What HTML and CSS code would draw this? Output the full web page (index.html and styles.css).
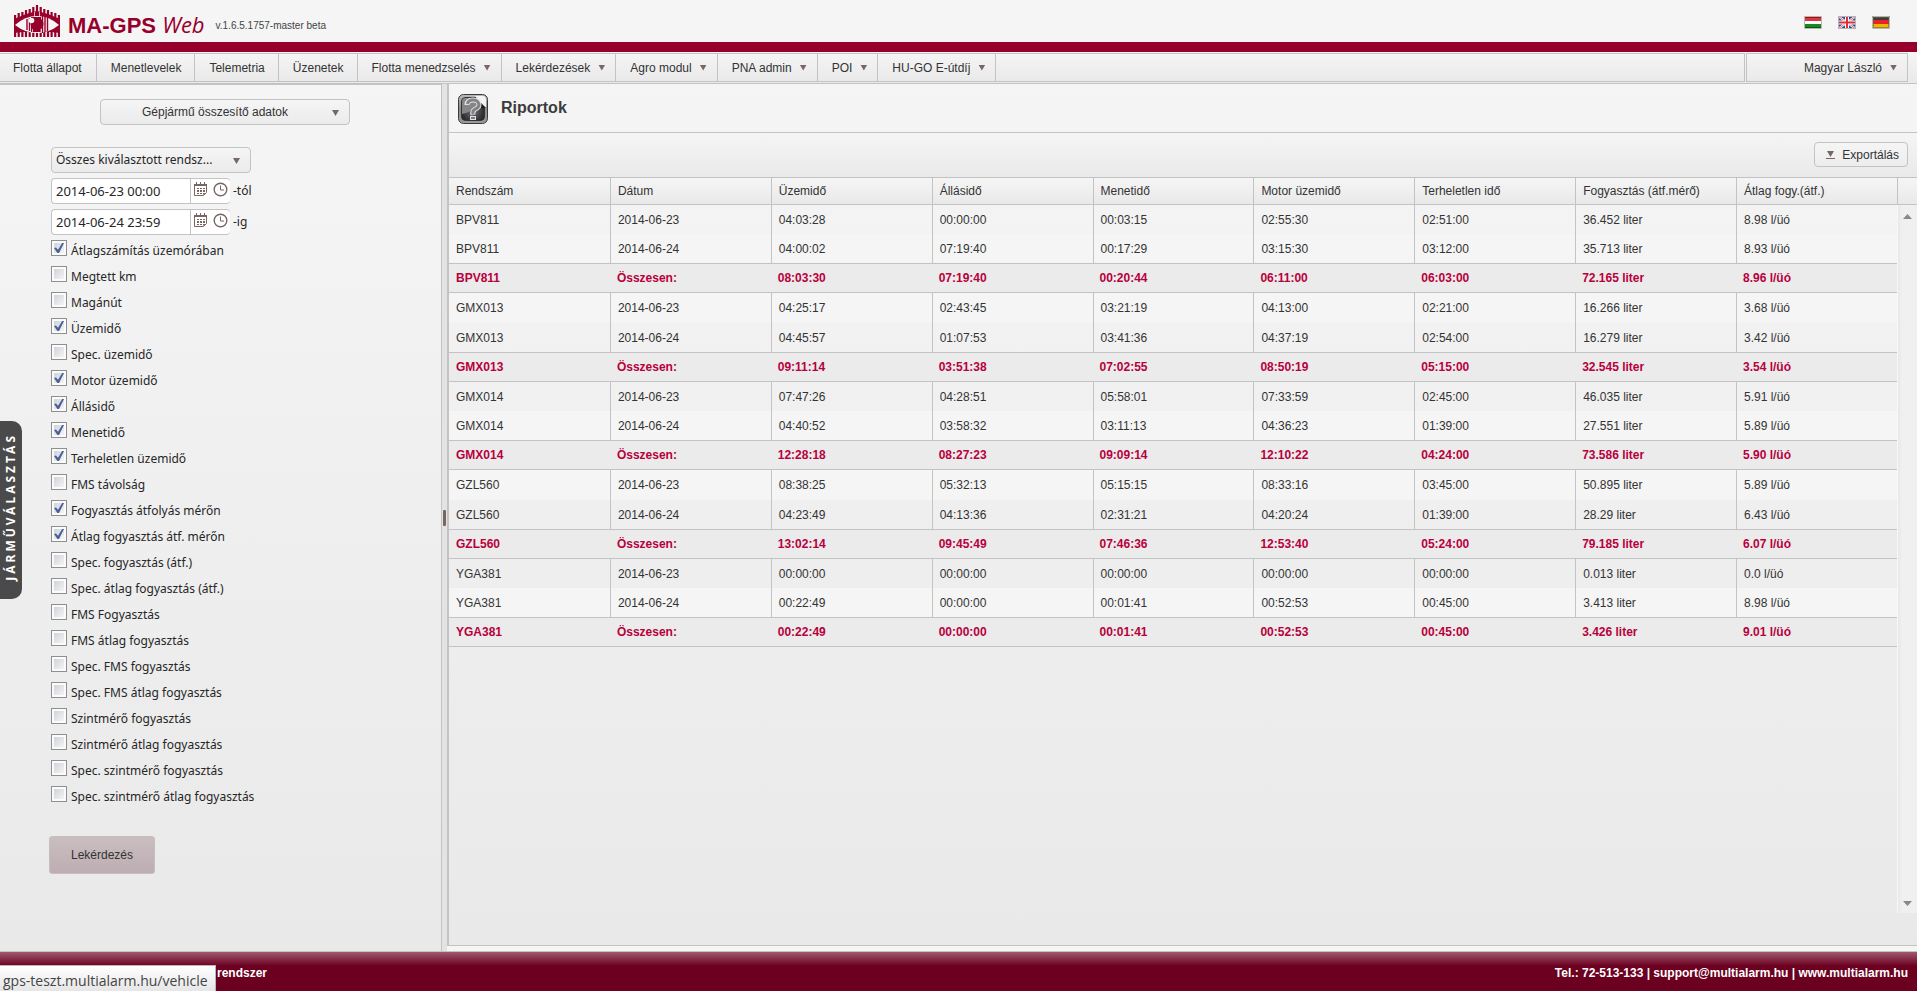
FILE: index.html
```html
<!DOCTYPE html>
<html lang="hu">
<head>
<meta charset="utf-8">
<title>MA-GPS Web</title>
<link rel="stylesheet" href="styles.css">
</head>
<body>
<svg class="defs" width="0" height="0" aria-hidden="true">
  <symbol id="calendar" viewBox="0 0 15 15"><path fill="none" stroke="#776661" d="M1.5 2.5h12v8l-3 3h-9z"/><path fill="#776661" d="M1 2h13v2H1zM3 0h1v3H3zM7 0h1v3H7zM11 0h1v3h-1zM7 6h2v1H7zM10 6h2v1h-2zM4 6h2v1H4zM4 8h2v2H4zM7 8h2v2H7zM10 8h2v2h-2zM4 11h2v1H4zM7 11h2v1H7zM10 11h3l-3 2z"/></symbol>
  <symbol id="clock" viewBox="0 0 15 15"><circle cx="7.500" cy="7.500" r="6.300" fill="none" stroke="#776661" stroke-width="1.400"/><path d="M7.500 3.500v4.500h3.500" fill="none" stroke="#776661"/></symbol>
</svg>

<header class="brand">
  <svg class="logo" viewBox="0 0 46 32" aria-hidden="true">
    <path stroke="#96002b" stroke-width="2.200" d="M1.100 10v22M4.700 8v24M8.400 7v25M12 5v27M15.700 4v28M19.300 2v30M23 0v32M26.700 2v30M30.300 4v28M34 5v27M37.600 7v25M41.300 8v24M44.900 10v22"/>
    <path fill="#96002b" d="M0 14L12 9l11-3 11 3 12 5v14l-9-1H9l-9 1z"/>
    <path fill="#f5f5f5" d="M1 20q10-9 22-9t22 9q-10 8-22 8T1 20z"/>
    <path fill="none" stroke="#96002b" stroke-width="1.400" d="M13 14v11M15.500 13v13M31 12v15M33.500 13v13M28.500 11v17"/>
    <path fill="#96002b" d="M17 12h10v15H17z"/>
    <circle cx="23" cy="19" r="6.500" fill="#96002b"/>
    <circle cx="17.500" cy="15.500" r="2.800" fill="#f5f5f5"/>
    <path stroke="#f5f5f5" stroke-width=".7" d="M20.500 7v5M25.500 7v5M18.500 24v4M27 24v4"/>
  </svg>
  <h1 class="brand-name">MA-GPS <em>Web</em></h1>
  <span class="version">v.1.6.5.1757-master beta</span>
  <div class="flags">
    <button type="button" aria-label="Magyar"><svg viewBox="0 0 18 13"><path fill="#fff" d="M0 0h18v13H0z"/><path fill="#d63a3f" d="M1 1h16v4H1z"/><path fill="#168a1c" d="M1 8h16v4H1z"/><path fill="none" stroke="#a90d12" d="M1 1.500h16"/><path fill="none" stroke="#075a0c" d="M1 11.500h16"/><path fill="none" stroke="#b5b5b5" d="M.5.5h17v12H.5z"/></svg></button>
    <button type="button" aria-label="English"><svg viewBox="0 0 18 13"><path fill="#2f479c" d="M0 0h18v13H0z"/><path stroke="#fff" stroke-width="2.200" d="M0 0l18 13M18 0L0 13"/><path stroke="#d8454c" stroke-width=".8" d="M0 0l18 13M18 0L0 13"/><path stroke="#fff" stroke-width="4" d="M9 0v13M0 6.500h18"/><path stroke="#dc3038" stroke-width="2" d="M9 0v13M0 6.500h18"/><path fill="none" stroke="#b5b5b5" d="M.5.5h17v12H.5z"/></svg></button>
    <button type="button" aria-label="Deutsch"><svg viewBox="0 0 18 13"><path fill="#3f3b36" d="M0 0h18v5H0z"/><path fill="#e8222a" d="M1 4h16v4H1z"/><path fill="#f0b400" d="M1 8h16v4H1z"/><path fill="none" stroke="#6c6045" opacity=".6" d="M1.500 1.500h15v10h-15z"/><path fill="none" stroke="#b5b5b5" d="M.5.5h17v12H.5z"/></svg></button>
  </div>
</header>

<nav class="menu">
  <div class="menu-items">
    <button type="button">Flotta állapot</button>
    <button type="button">Menetlevelek</button>
    <button type="button">Telemetria</button>
    <button type="button">Üzenetek</button>
    <button type="button" class="drop">Flotta menedzselés<i class="arrow"></i></button>
    <button type="button" class="drop">Lekérdezések<i class="arrow"></i></button>
    <button type="button" class="drop">Agro modul<i class="arrow"></i></button>
    <button type="button" class="drop">PNA admin<i class="arrow"></i></button>
    <button type="button" class="drop">POI<i class="arrow"></i></button>
    <button type="button" class="drop">HU-GO E-útdíj<i class="arrow"></i></button>
  </div>
  <button type="button" class="user drop">Magyar László<i class="arrow"></i></button>
</nav>

<div class="workspace">
  <aside class="sidebar">
    <button type="button" class="side-tab"><span>JÁRMŰVÁLASZTÁS</span></button>
    <div class="picker report-picker">
      <select aria-label="Riport típusa"><option>Gépjármű összesítő adatok</option></select><i class="arrow"></i>
    </div>
    <form class="filters">
      <div class="picker plate-picker">
        <select aria-label="Rendszámok"><option>Összes kiválasztott rendsz...</option></select><i class="arrow"></i>
      </div>
      <div class="date-row">
        <div class="date-field"><input id="from" type="text" value="2014-06-23 00:00"><button type="button" aria-label="Naptár"><svg><use href="#calendar"/></svg></button><button type="button" aria-label="Óra"><svg><use href="#clock"/></svg></button></div>
        <label for="from">-tól</label>
      </div>
      <div class="date-row">
        <div class="date-field"><input id="to" type="text" value="2014-06-24 23:59"><button type="button" aria-label="Naptár"><svg><use href="#calendar"/></svg></button><button type="button" aria-label="Óra"><svg><use href="#clock"/></svg></button></div>
        <label for="to">-ig</label>
      </div>
      <div class="checks">
        <label><input type="checkbox" checked><span>Átlagszámítás üzemórában</span></label>
        <label><input type="checkbox"><span>Megtett km</span></label>
        <label><input type="checkbox"><span>Magánút</span></label>
        <label><input type="checkbox" checked><span>Üzemidő</span></label>
        <label><input type="checkbox"><span>Spec. üzemidő</span></label>
        <label><input type="checkbox" checked><span>Motor üzemidő</span></label>
        <label><input type="checkbox" checked><span>Állásidő</span></label>
        <label><input type="checkbox" checked><span>Menetidő</span></label>
        <label><input type="checkbox" checked><span>Terheletlen üzemidő</span></label>
        <label><input type="checkbox"><span>FMS távolság</span></label>
        <label><input type="checkbox" checked><span>Fogyasztás átfolyás mérőn</span></label>
        <label><input type="checkbox" checked><span>Átlag fogyasztás átf. mérőn</span></label>
        <label><input type="checkbox"><span>Spec. fogyasztás (átf.)</span></label>
        <label><input type="checkbox"><span>Spec. átlag fogyasztás (átf.)</span></label>
        <label><input type="checkbox"><span>FMS Fogyasztás</span></label>
        <label><input type="checkbox"><span>FMS átlag fogyasztás</span></label>
        <label><input type="checkbox"><span>Spec. FMS fogyasztás</span></label>
        <label><input type="checkbox"><span>Spec. FMS átlag fogyasztás</span></label>
        <label><input type="checkbox"><span>Szintmérő fogyasztás</span></label>
        <label><input type="checkbox"><span>Szintmérő átlag fogyasztás</span></label>
        <label><input type="checkbox"><span>Spec. szintmérő fogyasztás</span></label>
        <label><input type="checkbox"><span>Spec. szintmérő átlag fogyasztás</span></label>
      </div>
      <button type="button" class="submit">Lekérdezés</button>
    </form>
  </aside>

  <div class="splitter"><i></i></div>

  <main class="report">
    <div class="report-title">
      <svg viewBox="0 0 30 30" aria-hidden="true">
        <defs><linearGradient id="frame" x2="0" y2="1"><stop offset="0" stop-color="#b9b9b9"/><stop offset=".5" stop-color="#8b8b8b"/><stop offset="1" stop-color="#9b9b9b"/></linearGradient><radialGradient id="glow" cx=".5" cy=".6"><stop offset="0" stop-color="#70727a"/><stop offset="1" stop-color="#292b2e"/></radialGradient></defs>
        <rect x=".5" y=".5" width="29" height="29" rx="5" fill="url(#frame)" stroke="#3c3c3c"/>
        <rect x="3.500" y="3.500" width="23" height="23" rx="4" fill="url(#glow)" stroke="#333"/>
        <path fill="#858585" d="M4 7q0-3 3-3h16q4 0 4 4v5l-4-3Q14 18 4 20z"/>
        <path fill="#f4f4f4" d="M17 2h8q3 0 3 4v8l-5-5z"/>
        <path fill="#1d1e20" d="M23 9l5 5h-5z"/>
        <path fill="none" stroke="#e2e2e2" stroke-width="5" d="M9 11q0-5 6-5t6 4.500q0 3-3.500 4.500T15 21"/>
        <path fill="none" stroke="#828386" stroke-width="3" d="M9.500 10q.5-4 5.500-4t6 4.500q0 3-3.500 4.500T15 20.500"/>
        <rect x="12.500" y="22.500" width="5" height="3" fill="#7b7c80" stroke="#e2e2e2"/>
      </svg>
      <h2>Riportok</h2>
    </div>
    <div class="toolbar">
      <button type="button" class="export"><svg viewBox="0 0 9 8" aria-hidden="true"><path fill="#776661" d="M1 0h7L4.500 6zM0 7h9v1H0z"/></svg>Exportálás</button>
    </div>
    <div class="grid">
      <table>
        <thead><tr><th>Rendszám</th><th>Dátum</th><th>Üzemidő</th><th>Állásidő</th><th>Menetidő</th><th>Motor üzemidő</th><th>Terheletlen idő</th><th>Fogyasztás (átf.mérő)</th><th>Átlag fogy.(átf.)</th></tr></thead>
        <tbody>
          <tr><td>BPV811</td><td>2014-06-23</td><td>04:03:28</td><td>00:00:00</td><td>00:03:15</td><td>02:55:30</td><td>02:51:00</td><td>36.452 liter</td><td>8.98 l/üó</td></tr>
          <tr class="light"><td>BPV811</td><td>2014-06-24</td><td>04:00:02</td><td>07:19:40</td><td>00:17:29</td><td>03:15:30</td><td>03:12:00</td><td>35.713 liter</td><td>8.93 l/üó</td></tr>
          <tr class="total"><td>BPV811</td><td>Összesen:</td><td>08:03:30</td><td>07:19:40</td><td>00:20:44</td><td>06:11:00</td><td>06:03:00</td><td>72.165 liter</td><td>8.96 l/üó</td></tr>
        </tbody>
        <tbody>
          <tr class="light"><td>GMX013</td><td>2014-06-23</td><td>04:25:17</td><td>02:43:45</td><td>03:21:19</td><td>04:13:00</td><td>02:21:00</td><td>16.266 liter</td><td>3.68 l/üó</td></tr>
          <tr><td>GMX013</td><td>2014-06-24</td><td>04:45:57</td><td>01:07:53</td><td>03:41:36</td><td>04:37:19</td><td>02:54:00</td><td>16.279 liter</td><td>3.42 l/üó</td></tr>
          <tr class="total"><td>GMX013</td><td>Összesen:</td><td>09:11:14</td><td>03:51:38</td><td>07:02:55</td><td>08:50:19</td><td>05:15:00</td><td>32.545 liter</td><td>3.54 l/üó</td></tr>
        </tbody>
        <tbody>
          <tr><td>GMX014</td><td>2014-06-23</td><td>07:47:26</td><td>04:28:51</td><td>05:58:01</td><td>07:33:59</td><td>02:45:00</td><td>46.035 liter</td><td>5.91 l/üó</td></tr>
          <tr class="light"><td>GMX014</td><td>2014-06-24</td><td>04:40:52</td><td>03:58:32</td><td>03:11:13</td><td>04:36:23</td><td>01:39:00</td><td>27.551 liter</td><td>5.89 l/üó</td></tr>
          <tr class="total"><td>GMX014</td><td>Összesen:</td><td>12:28:18</td><td>08:27:23</td><td>09:09:14</td><td>12:10:22</td><td>04:24:00</td><td>73.586 liter</td><td>5.90 l/üó</td></tr>
        </tbody>
        <tbody>
          <tr class="light"><td>GZL560</td><td>2014-06-23</td><td>08:38:25</td><td>05:32:13</td><td>05:15:15</td><td>08:33:16</td><td>03:45:00</td><td>50.895 liter</td><td>5.89 l/üó</td></tr>
          <tr><td>GZL560</td><td>2014-06-24</td><td>04:23:49</td><td>04:13:36</td><td>02:31:21</td><td>04:20:24</td><td>01:39:00</td><td>28.29 liter</td><td>6.43 l/üó</td></tr>
          <tr class="total"><td>GZL560</td><td>Összesen:</td><td>13:02:14</td><td>09:45:49</td><td>07:46:36</td><td>12:53:40</td><td>05:24:00</td><td>79.185 liter</td><td>6.07 l/üó</td></tr>
        </tbody>
        <tbody>
          <tr><td>YGA381</td><td>2014-06-23</td><td>00:00:00</td><td>00:00:00</td><td>00:00:00</td><td>00:00:00</td><td>00:00:00</td><td>0.013 liter</td><td>0.0 l/üó</td></tr>
          <tr class="light"><td>YGA381</td><td>2014-06-24</td><td>00:22:49</td><td>00:00:00</td><td>00:01:41</td><td>00:52:53</td><td>00:45:00</td><td>3.413 liter</td><td>8.98 l/üó</td></tr>
          <tr class="total"><td>YGA381</td><td>Összesen:</td><td>00:22:49</td><td>00:00:00</td><td>00:01:41</td><td>00:52:53</td><td>00:45:00</td><td>3.426 liter</td><td>9.01 l/üó</td></tr>
        </tbody>
      </table>
      <div class="scroll"><div class="scroll-head"></div><div class="scrollbar"><i class="up"></i><i class="down"></i></div></div>
    </div>
  </main>
</div>

<footer class="footer">
  <span>rendszer</span>
  <span>Tel.: 72-513-133 | support@multialarm.hu | www.multialarm.hu</span>
  <div class="status">gps-teszt.multialarm.hu/vehicle</div>
</footer>
</body>
</html>
```

FILE: styles.css
```css
:root {
  --line: #c3c3c3;
  --maroon: #96002b;
  --brown: #776661;
  --lucida: "Lucida Grande", "Lucida Sans Unicode", "Noto Sans", sans-serif;
}
* { box-sizing: border-box; }
body {
  margin: 0;
  height: 100vh;
  display: flex;
  flex-direction: column;
  overflow: hidden;
  background: #f5f5f5;
  color: #333;
  font: 12px/16px Arial, "Liberation Sans", sans-serif;
}
button, input, select { font: inherit; color: inherit; margin: 0; }
button { padding: 0; border: 0; background: none; }
.defs { position: absolute; }

.brand {
  display: flex;
  align-items: center;
  height: 52px;
  flex: none;
  padding: 0 27px 0 14px;
  border-bottom: 10px solid var(--maroon);
}
.logo { width: 46px; height: 32px; }
.brand-name { margin: 8px 0 0 8px; font-size: 22px; line-height: 26px; color: var(--maroon); }
.brand-name em { font-family: "Trebuchet MS", "Open Sans", sans-serif; font-weight: 400; }
.version { margin: 10px 0 0 11px; font-size: 10px; color: #444; }
.flags { display: flex; gap: 16px; margin: 3px 0 0 auto; }
.flags svg { display: block; width: 18px; height: 13px; }

.menu {
  display: flex;
  gap: 1px;
  flex: none;
  height: 32px;
  padding: 1px 9px 1px 0;
  border-bottom: 1px solid var(--line);
  background: linear-gradient(#f5f5f5, #e9e9e9);
}
.menu-items { display: flex; flex: 1; border: 1px solid var(--line); border-left: 0; }
.menu button { padding: 0 13px 0 14px; border-right: 1px solid var(--line); }
.menu button:first-child { padding: 0 14px 0 13px; }
.menu .drop { display: flex; align-items: center; gap: 8px; padding: 0 10px 0 14px; }
.menu .user { width: 162px; justify-content: flex-end; border: 1px solid var(--line); }
.arrow { width: 7px; height: 6px; background: var(--brown); clip-path: polygon(0 0, 100% 0, 50% 100%); }

.workspace { display: flex; flex: 1; min-height: 0; }
.sidebar {
  position: relative;
  width: 442px;
  flex: none;
  padding-top: 14px;
  border-top: 1px solid var(--line);
  border-right: 1px solid var(--line);
  background: linear-gradient(#f5f5f5, #e9e9e9);
}
.picker { position: relative; height: 26px; }
.picker select {
  appearance: none;
  width: 100%;
  height: 26px;
  border: 1px solid var(--line);
  border-radius: 4px;
  background: linear-gradient(#f5f5f5, #ebebeb);
}
.picker .arrow { position: absolute; right: 11px; top: 11px; pointer-events: none; }
.report-picker { width: 250px; margin-left: 100px; }
.report-picker select { padding: 0 20px 0 0; text-align: center; text-align-last: center; }
.filters { padding: 22px 0 0 51px; font-family: var(--lucida); color: #262626; }
.plate-picker { width: 200px; }
.plate-picker select { padding: 0 20px 0 4px; }
.date-row { display: flex; align-items: center; gap: 3px; height: 26px; margin-top: 5px; }
.date-field {
  display: flex;
  width: 179px;
  height: 26px;
  border: 1px solid var(--line);
  border-right: 0;
  border-radius: 4px;
  background: #fff;
}
.date-field input { width: 139px; padding: 0 4px; border: 0; border-right: 1px solid var(--line); background: none; outline: 0; font-size: 13px; }
.date-field button { width: 20px; }
.date-field svg { display: block; width: 15px; height: 15px; margin: 0 auto 4px; }
.checks { padding-top: 4px; }
.checks label { display: flex; gap: 4px; height: 26px; }
.checks span { padding-top: 4px; }
.checks input {
  appearance: none;
  width: 16px;
  height: 16px;
  margin: 1px 0 0;
  border: 1px solid #8e8f8f;
  background: linear-gradient(135deg, #cfd3db, #f4f4f4) content-box, #fbfbfb;
  padding: 2px;
}
.checks input:checked::after {
  content: "";
  display: block;
  width: 10px;
  height: 10px;
  background: #4a5f97;
  clip-path: polygon(0 50%, 20% 45%, 40% 68%, 82% 0, 100% 0, 50% 100%, 34% 100%);
}
.submit {
  width: 106px;
  height: 38px;
  margin: 25px 0 0 -2px;
  border: 1px solid #c4bfc1;
  border-radius: 3px;
  background: linear-gradient(#c9bebe, #beadb4);
  color: #333;
  font: 12px Arial, "Liberation Sans", sans-serif;
}
.side-tab {
  position: absolute;
  left: 0;
  top: 336px;
  width: 22px;
  height: 178px;
  border-radius: 0 10px 10px 0;
  background: #4a4a4a;
  color: #fff;
  font: bold 12px/22px var(--lucida);
}
.side-tab span { writing-mode: vertical-rl; rotate: 180deg; letter-spacing: 3px; }

.splitter { display: flex; align-items: center; justify-content: center; width: 5px; flex: none; background: #e3e3e3; }
.splitter i { width: 3px; height: 16px; border-radius: 1px; background: var(--brown); }

.report {
  flex: 1;
  min-width: 0;
  display: flex;
  flex-direction: column;
  margin-bottom: 5px;
  border-left: 2px solid var(--line);
  border-bottom: 1px solid var(--line);
  background: linear-gradient(#f5f5f5, #e9e9e9);
}
.report-title { display: flex; gap: 13px; height: 49px; flex: none; padding: 10px 0 0 9px; border-bottom: 1px solid var(--line); }
.report-title svg { width: 30px; height: 30px; }
.report-title h2 { margin: 4px 0 0; font-size: 16px; line-height: 20px; color: #3c3c3c; }
.toolbar { display: flex; justify-content: flex-end; align-items: flex-start; height: 45px; flex: none; padding: 9px 9px 0; border-bottom: 1px solid var(--line); background: linear-gradient(#f5f5f5, #e9e9e9); }
.export { display: flex; align-items: center; gap: 7px; height: 25px; padding: 0 8px 0 11px; border: 1px solid var(--line); border-radius: 4px; background: linear-gradient(#f5f5f5, #ededed); }
.export svg { width: 9px; height: 8px; }
.grid { display: grid; grid-template-columns: 1fr 20px; align-items: start; flex: 1; min-height: 0; padding-bottom: 32px; }
table { width: 100%; table-layout: fixed; border-spacing: 0; }
th, td { height: 29px; padding: 0 7px; text-align: left; border-left: 1px solid var(--line); }
th { height: 27px; font-weight: 400; border-bottom: 1px solid var(--line); background: linear-gradient(#f5f5f5, #e9e9e9); }
th:first-child, td:first-child { border-left: 0; }
tbody:nth-of-type(even) tr:first-child td { height: 30px; }
.light td { background: #f5f5f5; }
.total td { height: 30px; border: solid var(--line); border-width: 1px 0; background: #ebebeb; color: #b8003c; font-weight: 700; }
.scroll { display: flex; flex-direction: column; align-self: stretch; }
.scroll-head { height: 27px; flex: none; border-left: 1px solid var(--line); border-bottom: 1px solid var(--line); background: linear-gradient(#f5f5f5, #e9e9e9); }
.scrollbar { display: flex; flex-direction: column; justify-content: space-between; align-items: center; flex: 1; padding: 9px 0 7px; border-left: 1px solid #f8f8f8; background: linear-gradient(90deg, #e8e8e8, #f0f0f0 4px); }
.scrollbar i { width: 9px; height: 5px; background: #888; }
.up { clip-path: polygon(50% 0, 100% 100%, 0 100%); }
.down { clip-path: polygon(0 0, 100% 0, 50% 100%); }

.footer {
  position: relative;
  display: flex;
  justify-content: space-between;
  height: 40px;
  flex: none;
  padding: 13px 9px 0 217px;
  border-top: 1px solid var(--line);
  background: linear-gradient(#a1586f, #6b0020 14px);
  color: #fff;
  font-weight: 700;
}
.status {
  position: absolute;
  left: 0;
  bottom: 0;
  height: 26px;
  padding: 0 7px 0 3px;
  border: solid #b8b8b8;
  border-width: 1px 1px 0 0;
  background: linear-gradient(#fff, #e6e6e6);
  color: #444;
  font: 14px/30px "Open Sans", sans-serif;
}
```
